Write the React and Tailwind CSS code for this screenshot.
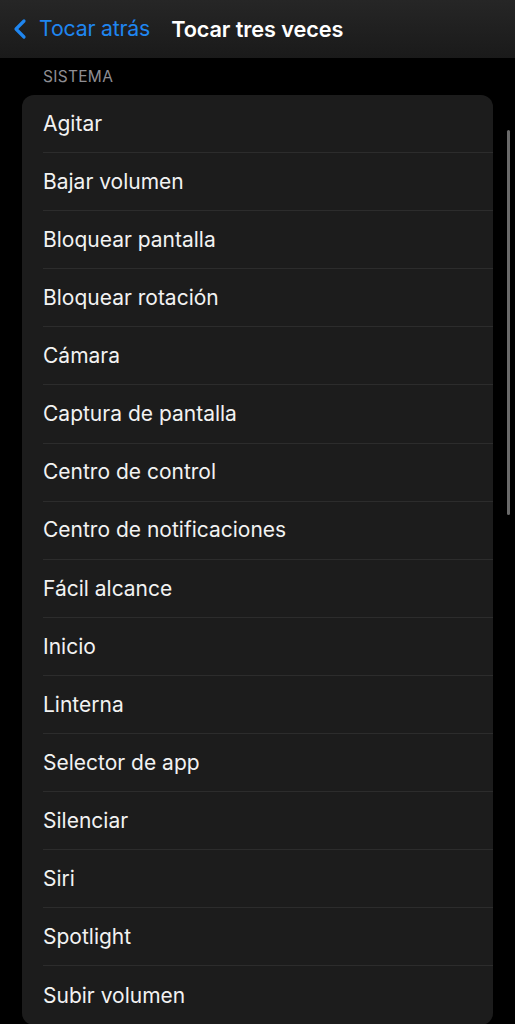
import { ChevronLeft } from 'lucide-react';

const items = [
  'Agitar',
  'Bajar volumen',
  'Bloquear pantalla',
  'Bloquear rotación',
  'Cámara',
  'Captura de pantalla',
  'Centro de control',
  'Centro de notificaciones',
  'Fácil alcance',
  'Inicio',
  'Linterna',
  'Selector de app',
  'Silenciar',
  'Siri',
  'Spotlight',
  'Subir volumen',
];

export default function App() {
  return (
    <div
      className="w-[515px] h-[1024px] bg-black overflow-hidden relative"
      style={{ fontFamily: 'Inter, "Liberation Sans", sans-serif' }}
    >
      {/* Nav bar */}
      <div className="h-[58px] bg-gradient-to-b from-[#262626] to-[#1a1a1a] flex items-center">
        <div className="flex items-center pl-[4px] text-[#1f86f0]">
          <ChevronLeft className="w-[32px] h-[34px]" strokeWidth={2.4} />
          <span className="text-[21.3px] ml-[3px] tracking-[-0.2px]">Tocar atrás</span>
        </div>
        <span className="text-[21.7px] font-semibold text-white ml-[21px] tracking-[-0.1px]">
          Tocar tres veces
        </span>
      </div>

      {/* Section header */}
      <div className="h-[37px] pl-[43px] pt-[7px] text-[15.5px] text-[#8e8e93] tracking-[0.3px]">
        SISTEMA
      </div>

      {/* List */}
      <div className="mx-[22px] bg-[#1c1c1c] rounded-[12px] overflow-hidden">
        {items.map((label, i) => (
          <div key={label} className="pl-[21px]">
            <div
              className={`h-[58.1px] flex items-center text-[21px] text-[#f2f2f2] ${
                i < items.length - 1 ? 'border-b border-[#2c2c2c]' : ''
              }`}
            >
              {label}
            </div>
          </div>
        ))}
      </div>

      {/* Scroll indicator */}
      <div className="absolute right-[5px] top-[130px] w-[3px] h-[385px] rounded-full bg-[#6a6a6a]" />
    </div>
  );
}
